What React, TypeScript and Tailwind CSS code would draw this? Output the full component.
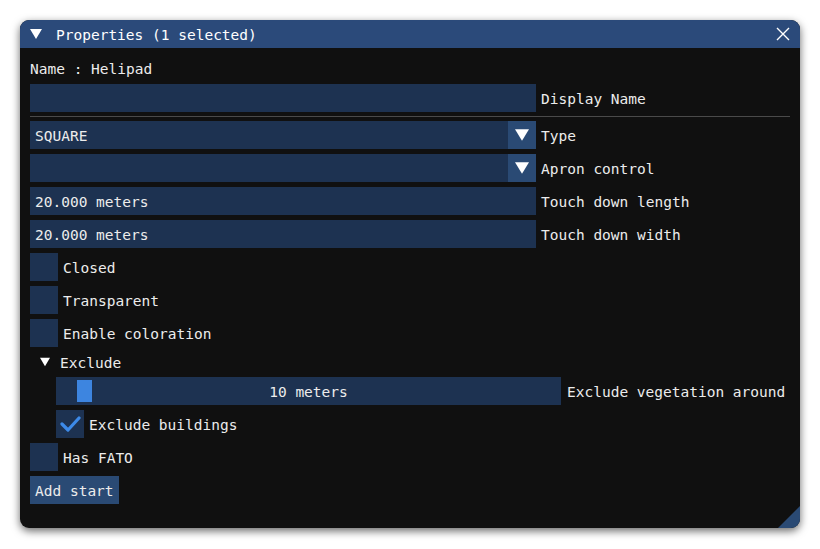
import React from "react";

const Tri = ({ size = 12, className = "" }: { size?: number; className?: string }) => (
  <svg width={size} height={size} viewBox="0 0 12 12" className={className}>
    <polygon points="0,1 12,1 6,11" fill="#ffffff" />
  </svg>
);

const Row = ({ children, label }: { children: React.ReactNode; label?: string }) => (
  <div className="flex h-[28px] items-center gap-[5px]">
    {children}
    {label && <span className="whitespace-nowrap pt-[4px]">{label}</span>}
  </div>
);

const Input = ({ value = "", w = "w-[506px]" }: { value?: string; w?: string }) => (
  <div className={`${w} h-[28px] bg-[#1d3251] flex items-center px-[5px] pt-[4px] whitespace-nowrap`}>{value}</div>
);

const Combo = ({ value = "" }: { value?: string }) => (
  <div className="w-[506px] h-[28px] flex">
    <div className="flex-1 bg-[#1d3251] flex items-center px-[5px] pt-[4px]">{value}</div>
    <div className="w-[28px] h-[28px] bg-[#2a4a74] flex items-center justify-center">
      <Tri size={14} />
    </div>
  </div>
);

const Check = ({ checked = false }: { checked?: boolean }) => (
  <div className="w-[28px] h-[28px] bg-[#1d3251] flex items-center justify-center shrink-0">
    {checked && (
      <svg width="22" height="22" viewBox="0 0 22 22">
        <polyline points="3,11 9,17 20,5" fill="none" stroke="#3d8ae8" strokeWidth="3.2" strokeLinecap="round" strokeLinejoin="round" />
      </svg>
    )}
  </div>
);

export default function App() {
  return (
    <div className="w-[820px] h-[549px] bg-white relative" style={{ fontFamily: '"DejaVu Sans Mono", "Liberation Mono", monospace' }}>
      <div className="absolute left-[20px] top-[20px] w-[780px] h-[508px] rounded-[9px] overflow-hidden bg-[#101010] shadow-[0_3px_9px_rgba(0,0,0,0.6)] text-[14.5px] text-[#ececec] flex flex-col">
        <div className="h-[28px] bg-[#2b4a7a] flex items-center pl-[10px] pr-[10px] shrink-0">
          <Tri size={12} />
          <span className="ml-[14px] text-white pt-[4px]">Properties (1 selected)</span>
          <div className="flex-1" />
          <svg width="14" height="14" viewBox="0 0 14 14">
            <path d="M1 1 L13 13 M13 1 L1 13" stroke="#ffffff" strokeWidth="1.4" />
          </svg>
        </div>
        <div className="relative flex-1 px-[10px] pt-[10px]">
          <div className="h-[20px] flex items-center pt-[4px]">Name : Helipad</div>
          <div className="mt-[6px] flex flex-col">
            <Row label="Display Name"><Input /></Row>
            <div className="h-[1px] bg-[#4a4a4a] my-[4px]" />
            <div className="flex flex-col gap-[5px]">
              <Row label="Type"><Combo value="SQUARE" /></Row>
              <Row label="Apron control"><Combo /></Row>
              <Row label="Touch down length"><Input value="20.000 meters" /></Row>
              <Row label="Touch down width"><Input value="20.000 meters" /></Row>
              <Row label="Closed"><Check /></Row>
              <Row label="Transparent"><Check /></Row>
              <Row label="Enable coloration"><Check /></Row>
              <div className="h-[20px] flex items-center pl-[10px] gap-[10px]">
                <Tri size={10} />
                <span className="pt-[4px]">Exclude</span>
              </div>
              <div className="pl-[26px] flex flex-col gap-[5px]">
                <div className="flex h-[28px] items-center gap-[6px]">
                  <div className="relative w-[505px] h-[28px] bg-[#1d3251] flex items-center justify-center">
                    <div className="absolute left-[21px] top-[3px] w-[15px] h-[22px] bg-[#3d85e0]" />
                    <span className="relative pt-[4px]">10 meters</span>
                  </div>
                  <span className="whitespace-nowrap pt-[4px]">Exclude vegetation around</span>
                </div>
                <Row label="Exclude buildings"><Check checked /></Row>
              </div>
              <Row label="Has FATO"><Check /></Row>
              <div className="flex h-[28px]">
                <div className="h-[28px] px-[5px] pt-[4px] bg-[#2a4a74] flex items-center">Add start</div>
              </div>
            </div>
          </div>
          <svg className="absolute right-0 bottom-0" width="22" height="22" viewBox="0 0 22 22">
            <polygon points="22,0 22,22 0,22" fill="#2a4a74" />
          </svg>
        </div>
      </div>
    </div>
  );
}
